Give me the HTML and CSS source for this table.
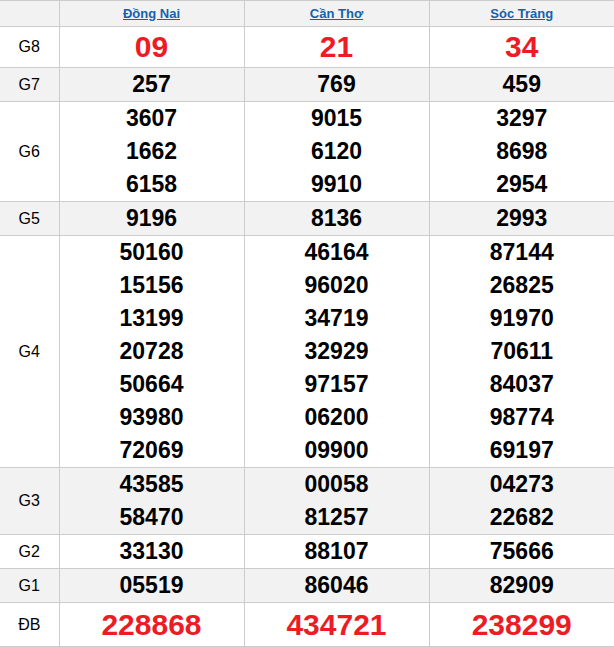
FILE: index.html
```html
<!DOCTYPE html>
<html lang="vi">
<head>
<meta charset="utf-8">
<title>Kết quả xổ số</title>
<link rel="stylesheet" href="styles.css">
</head>
<body>
<table class="kq">
  <colgroup>
    <col class="c-label">
    <col class="c-prov">
    <col class="c-prov">
    <col class="c-prov">
  </colgroup>
  <thead>
    <tr class="head">
      <th></th>
      <th><a href="#">Đồng Nai</a></th>
      <th><a href="#">Cần Thơ</a></th>
      <th><a href="#">Sóc Trăng</a></th>
    </tr>
  </thead>
  <tbody>
    <tr class="g8">
      <td class="lbl">G8</td>
      <td class="red">09</td>
      <td class="red">21</td>
      <td class="red">34</td>
    </tr>
    <tr class="alt">
      <td class="lbl">G7</td>
      <td><div class="n">257</div></td>
      <td><div class="n">769</div></td>
      <td><div class="n">459</div></td>
    </tr>
    <tr>
      <td class="lbl">G6</td>
      <td><div class="n">3607</div><div class="n">1662</div><div class="n">6158</div></td>
      <td><div class="n">9015</div><div class="n">6120</div><div class="n">9910</div></td>
      <td><div class="n">3297</div><div class="n">8698</div><div class="n">2954</div></td>
    </tr>
    <tr class="alt">
      <td class="lbl">G5</td>
      <td><div class="n">9196</div></td>
      <td><div class="n">8136</div></td>
      <td><div class="n">2993</div></td>
    </tr>
    <tr>
      <td class="lbl">G4</td>
      <td><div class="n">50160</div><div class="n">15156</div><div class="n">13199</div><div class="n">20728</div><div class="n">50664</div><div class="n">93980</div><div class="n">72069</div></td>
      <td><div class="n">46164</div><div class="n">96020</div><div class="n">34719</div><div class="n">32929</div><div class="n">97157</div><div class="n">06200</div><div class="n">09900</div></td>
      <td><div class="n">87144</div><div class="n">26825</div><div class="n">91970</div><div class="n">70611</div><div class="n">84037</div><div class="n">98774</div><div class="n">69197</div></td>
    </tr>
    <tr class="alt">
      <td class="lbl">G3</td>
      <td><div class="n">43585</div><div class="n">58470</div></td>
      <td><div class="n">00058</div><div class="n">81257</div></td>
      <td><div class="n">04273</div><div class="n">22682</div></td>
    </tr>
    <tr>
      <td class="lbl">G2</td>
      <td><div class="n">33130</div></td>
      <td><div class="n">88107</div></td>
      <td><div class="n">75666</div></td>
    </tr>
    <tr class="alt">
      <td class="lbl">G1</td>
      <td><div class="n">05519</div></td>
      <td><div class="n">86046</div></td>
      <td><div class="n">82909</div></td>
    </tr>
    <tr class="db">
      <td class="lbl">ĐB</td>
      <td class="red">228868</td>
      <td class="red">434721</td>
      <td class="red">238299</td>
    </tr>
  </tbody>
</table>
</body>
</html>
```

FILE: styles.css
```css
html, body {
  margin: 0;
  padding: 0;
  background: #fff;
}

body {
  font-family: "Liberation Sans", Arial, sans-serif;
  color: #000;
}

.kq {
  width: 614px;
  border-collapse: collapse;
  table-layout: fixed;
}

.c-label { width: 59px; }
.c-prov { width: 185px; }

.kq th,
.kq td {
  border: 1px solid #cccccc;
  padding: 0;
  text-align: center;
  vertical-align: middle;
}

.kq tr > :first-child { border-left: none; }
.kq tr > :last-child { border-right: none; }

.head th {
  background: #f2f2f2;
  height: 25px;
  font-size: 13px;
  font-weight: bold;
  line-height: 16px;
}

.head a {
  color: #1561ae;
  text-decoration: underline;
}

.alt td { background: #f2f2f2; }

.lbl {
  font-size: 16px;
  font-weight: normal;
}

.n {
  font-size: 23px;
  font-weight: bold;
  line-height: 33px;
  height: 33px;
}

.red {
  color: #ed1c24;
  font-size: 30px;
  font-weight: bold;
}

.g8 td { height: 40px; }
.db td { height: 43px; }
```
